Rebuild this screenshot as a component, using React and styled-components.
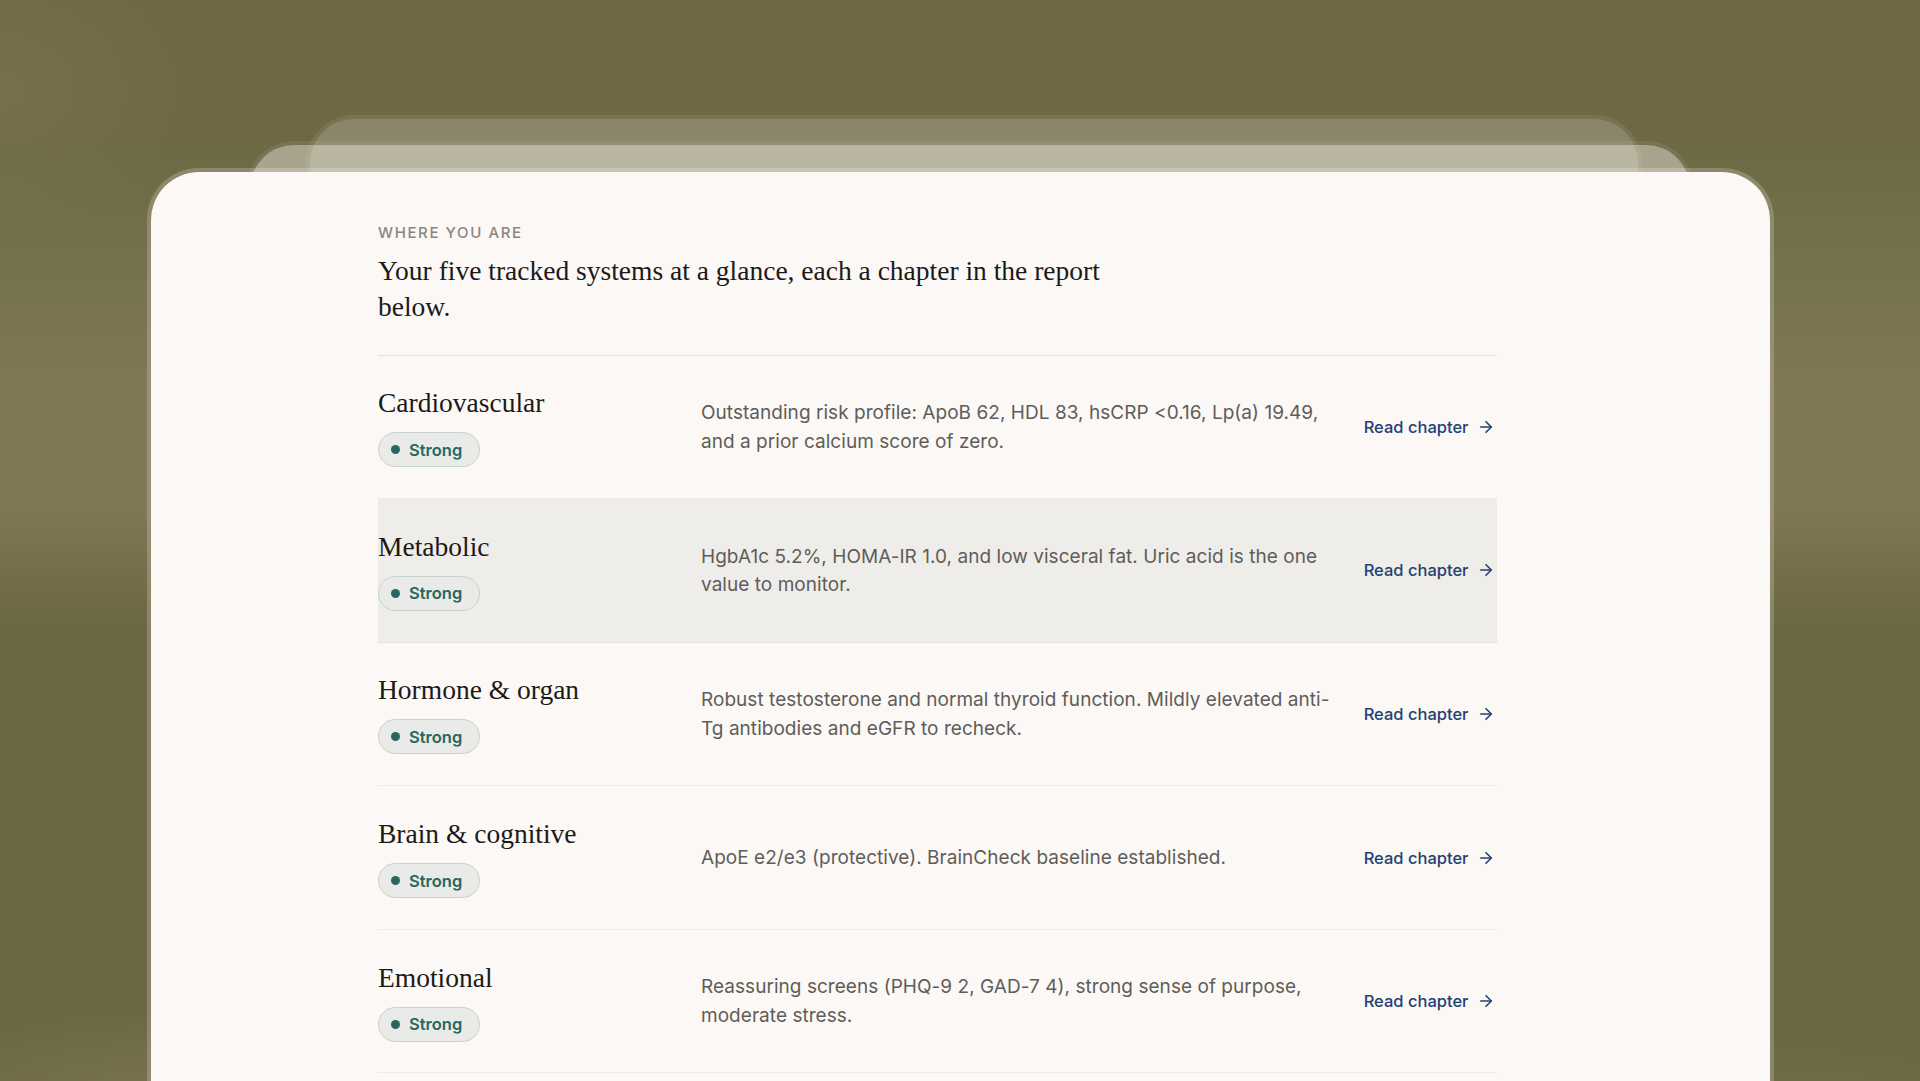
import React from 'react'
import styled, { createGlobalStyle } from 'styled-components'
import { ArrowRight } from 'lucide-react'

const GlobalStyle = createGlobalStyle`
html, body {
  margin: 0;
  padding: 0;
  height: 100%;
  overflow: hidden;
  background: #6e6844;
}
* {
  box-sizing: border-box;
}
`

const Page = styled.div`
position: relative;
height: 1081px;
overflow: hidden;
padding-top: 168px;
background:
  radial-gradient(200px 150px at 0px 90px, rgba(130,124,88,0.4), transparent 100%),
  radial-gradient(320px 110px at 170px 1110px, rgba(136,130,94,0.55), transparent 100%),
  radial-gradient(260px 90px at 1800px 1120px, rgba(136,130,94,0.3), transparent 100%),
  linear-gradient(180deg, #6e6844 0, #6e6945 150px, #76714d 260px, #7f7956 400px, #7e7855 510px, #75704b 565px, #6c6743 630px, #6b6642 1081px);
`
const BackSheet = styled.div`
position: absolute;
top: ${p => p.$top}px;
left: ${p => p.$left}px;
right: ${p => p.$right}px;
height: 200px;
border: 4px solid rgba(255,255,255,0.07);
border-radius: 48px 48px 0 0;
background: rgba(250,247,243,${p => p.$alpha});
background-clip: padding-box;
`
const Sheet = styled.main`
position: relative;
width: 1627px;
min-height: 1000px;
margin-left: 147px;
padding: 51px 0 0 227px;
background: #fbf8f5;
background-clip: padding-box;
border: 4px solid rgba(255,255,255,0.2);
border-radius: 52px 52px 0 0;
`
const Content = styled.div`
width: 1119px;
`
const Header = styled.header`
padding-bottom: 29.5px;
border-bottom: 1px solid #e6e3de;
`
const Eyebrow = styled.div`
font: 500 15px/20px Inter, sans-serif;
letter-spacing: 1.6px;
color: #8a8682;
text-transform: uppercase;
`
const Lead = styled.h2`
margin: 10px 0 0;
max-width: 760px;
font: 400 27.5px/36px "Liberation Serif", serif;
color: #1b1a18;
`
const Row = styled.div`
display: grid;
grid-template-columns: 323px 1fr 133px;
align-items: center;
height: 143.6px;
border-bottom: 1px solid ${p => p.$active ? '#e3e1dc' : '#efece8'};
background: ${p => p.$active ? '#eeede9' : 'transparent'};
`
const Name = styled.h3`
margin: 0 0 12px;
font: 400 27.5px/34px "Liberation Serif", serif;
color: #1b1a18;
`
const Badge = styled.span`
display: inline-flex;
align-items: center;
gap: 9px;
height: 35px;
padding: 0 17px 0 12px;
border: 1px solid #c9d2ce;
border-radius: 18px;
background: #e8ebe8;
font: 600 16.5px/20px Inter, sans-serif;
color: #2b6660;
`
const Dot = styled.i`
width: 9px;
height: 9px;
border-radius: 50%;
background: #2b6660;
`
const Summary = styled.p`
margin: 0;
padding: 2px 23px 0 0;
font: 400 19px/28.8px Inter, sans-serif;
letter-spacing: 0.04px;
color: #5f5d59;
`
const ChapterLink = styled.a`
display: flex;
align-items: center;
justify-content: flex-end;
gap: 8.5px;
padding-right: 2px;
white-space: nowrap;
font: 500 16.5px/20px Inter, sans-serif;
color: #234075;
text-decoration: none;
svg {
  flex-shrink: 0;
}
`

const systems = [
  { name: 'Cardiovascular', text: 'Outstanding risk profile: ApoB 62, HDL 83, hsCRP <0.16, Lp(a) 19.49, and a prior calcium score of zero.' },
  { name: 'Metabolic', text: 'HgbA1c 5.2%, HOMA-IR 1.0, and low visceral fat. Uric acid is the one value to monitor.', active: true },
  { name: 'Hormone & organ', text: 'Robust testosterone and normal thyroid function. Mildly elevated anti-Tg antibodies and eGFR to recheck.' },
  { name: 'Brain & cognitive', text: 'ApoE e2/e3 (protective). BrainCheck baseline established.' },
  { name: 'Emotional', text: 'Reassuring screens (PHQ-9 2, GAD-7 4), strong sense of purpose, moderate stress.' },
]

export default function App() {
  return (
    <Page>
      <GlobalStyle />
      <BackSheet $top={115} $left={306} $right={278} $alpha={0.21} />
      <BackSheet $top={141} $left={246} $right={226} $alpha={0.41} />
      <Sheet>
        <Content>
          <Header>
            <Eyebrow>Where you are</Eyebrow>
            <Lead>Your five tracked systems at a glance, each a chapter in the report below.</Lead>
          </Header>
          {systems.map(s => (
            <Row key={s.name} $active={s.active}>
              <div>
                <Name>{s.name}</Name>
                <Badge><Dot />Strong</Badge>
              </div>
              <Summary>{s.text}</Summary>
              <ChapterLink href="#">Read chapter <ArrowRight size={18} strokeWidth={2.2} /></ChapterLink>
            </Row>
          ))}
        </Content>
      </Sheet>
    </Page>
  )
}
